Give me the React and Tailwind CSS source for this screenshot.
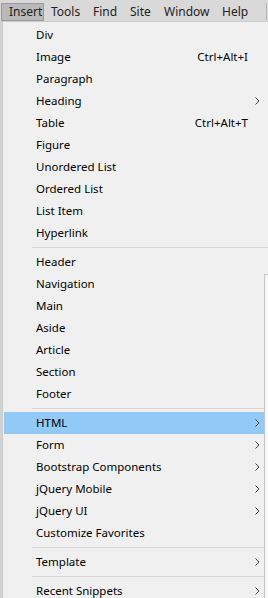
const groups = [
  [
    { label: "Div" },
    { label: "Image", shortcut: "Ctrl+Alt+I" },
    { label: "Paragraph" },
    { label: "Heading", sub: true },
    { label: "Table", shortcut: "Ctrl+Alt+T" },
    { label: "Figure" },
    { label: "Unordered List" },
    { label: "Ordered List" },
    { label: "List Item" },
    { label: "Hyperlink" },
  ],
  [
    { label: "Header" },
    { label: "Navigation" },
    { label: "Main" },
    { label: "Aside" },
    { label: "Article" },
    { label: "Section" },
    { label: "Footer" },
  ],
  [
    { label: "HTML", sub: true, active: true },
    { label: "Form", sub: true },
    { label: "Bootstrap Components", sub: true },
    { label: "jQuery Mobile", sub: true },
    { label: "jQuery UI", sub: true },
    { label: "Customize Favorites" },
  ],
  [{ label: "Template", sub: true }],
  [{ label: "Recent Snippets", sub: true }],
];

const menus = [
  { label: "Insert", w: "w-[43px]" },
  { label: "Tools", w: "w-[42px]" },
  { label: "Find", w: "w-[37px]" },
  { label: "Site", w: "w-[34px]" },
  { label: "Window", w: "w-[58px]" },
  { label: "Help", w: "w-[36px]" },
];

function Chevron() {
  return (
    <svg width="5" height="8" viewBox="0 0 5 8" className="text-[#444]">
      <path d="M0.5 0.5 L4 4 L0.5 7.5" fill="none" stroke="currentColor" strokeWidth="1" />
    </svg>
  );
}

function Item({ item }) {
  return (
    <div
      className={`h-[22px] mx-[1px] flex items-center pl-[32px] pr-[7px] ${
        item.active ? "bg-[#91c9f7]" : ""
      }`}
    >
      <span className="flex-1">{item.label}</span>
      {item.shortcut && <span className="mr-[12px]">{item.shortcut}</span>}
      {item.sub && <Chevron />}
    </div>
  );
}

export default function App() {
  return (
    <div
      className="w-[268px] h-[598px] overflow-hidden bg-[#f0f0f0] text-black relative"
      style={{ fontFamily: '"Segoe UI", "Noto Sans", sans-serif' }}
    >
      {/* menu bar */}
      <div className="h-[21px] bg-[#d9d9d9] flex items-center pl-[1px] text-[12px] text-[#222]">
        {menus.map((m, i) => (
          <div
            key={m.label}
            className={`${m.w} h-[18px] mt-[2px] flex items-center pl-[7px] ${
              i === 0 ? "bg-[#b9b9b9] border border-[#9a9a9a] pl-[6px]" : ""
            }`}
          >
            {m.label}
          </div>
        ))}
        <div className="ml-[15px] w-[1px] h-[17px] bg-[#b5b5b5] mt-[2px]" />
      </div>

      <div className="flex text-[11.5px]">
        {/* app behind, left edge */}
        <div className="w-[2px] bg-[#d2d2d2] h-[577px]" />
        {/* dropdown */}
        <div className="flex-1 border-l border-t border-[#cccccc] bg-[#f0f0f0] pt-[2px]">
          {groups.map((g, gi) => (
            <div key={gi}>
              {gi > 0 && (
                <div className="h-[7px] pt-[3px] pl-[29px]">
                  <div className="h-[1px] bg-[#d7d7d7]" />
                </div>
              )}
              {g.map((item) => (
                <Item key={item.label} item={item} />
              ))}
            </div>
          ))}
        </div>
      </div>

      {/* window edge showing behind the menu */}
      <div className="absolute left-[264px] top-[274px] w-[4px] h-[324px] border-l border-t border-[#c4c4c4] bg-[#f7f7f7]" />
    </div>
  );
}
